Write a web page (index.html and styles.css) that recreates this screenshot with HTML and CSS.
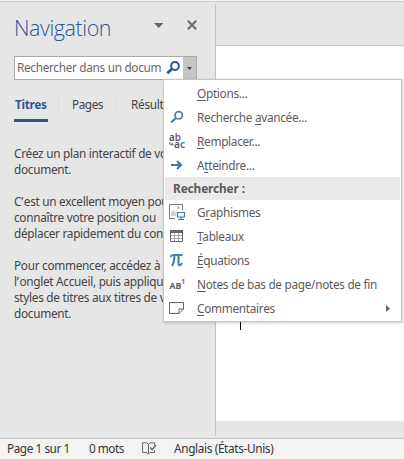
FILE: index.html
```html
<!DOCTYPE html>
<html lang="fr">
<head>
<meta charset="utf-8">
<title>Navigation</title>
<link rel="stylesheet" href="styles.css">
</head>
<body>
<div class="app">
  <div class="ribbon-edge"></div>
  <div class="workspace">
    <aside class="pane">
      <header class="pane-head">
        <h1>Navigation</h1>
        <svg class="caret" width="10" height="5" viewBox="0 0 10 5"><path d="M0 0h9.5L4.75 5z" fill="#666"/></svg>
        <svg class="close" width="10" height="10" viewBox="0 0 10 10"><path d="M.8.8l8.4 8.4M9.2.8L.8 9.2" stroke="#6c6c6c" stroke-width="2"/></svg>
      </header>
      <div class="search">
        <span class="search-text">Rechercher dans un docum</span>
        <svg class="glass" width="15" height="14" viewBox="0 0 15 14" fill="none" stroke="#2b579a"><circle cx="9" cy="5" r="3.9" stroke-width="2"/><path d="M6 8L1.2 12.3" stroke-width="2.7"/></svg>
        <span class="drop"><svg width="5" height="3" viewBox="0 0 5 3"><path d="M0 0h5L2.5 3z" fill="#444"/></svg></span>
      </div>
      <nav class="tabs">
        <span class="tab active">Titres</span><span class="tab pages">Pages</span><span class="tab results">Résultats</span>
      </nav>
      <div class="help">
        <p>Créez un plan interactif de votre<br>document.</p>
        <p>C<span class="apos">’</span>est un excellent moyen pour<br>connaître votre position ou<br>déplacer rapidement du contenu.</p>
        <p>Pour commencer, accédez à<br>l<span class="apos">’</span>onglet Accueil, puis appliquez<br>styles de titres aux titres de vos<br>document.</p>
      </div>
    </aside>
    <main class="canvas"><div class="sheet"><i class="cursor"></i></div></main>
  </div>
  <footer class="status">
    <span class="s-page">Page 1 sur 1</span>
    <span class="s-words">0 mots</span>
    <svg class="s-book" width="15" height="13" viewBox="0 0 15 13" fill="none" stroke="#666"><path d="M6.5 2.5v9M6.5 2.5L5 .8H.6v9.7H5l1.5 1.7L8 10.5h4.5V8M6.5 2.5L8 .8h4.5v2"/><path d="M8 5.5l2.2 2.2L14 3" stroke-width="1.4"/></svg>
    <span class="s-lang">Anglais (États-Unis)</span>
  </footer>

  <div class="menu">
    <div class="item"><span class="ico"></span><span><u>O</u>ptions...</span></div>
    <div class="item"><span class="ico"><svg width="16" height="16" viewBox="0 0 16 16" fill="none" stroke="#4a7ebb"><circle cx="9.7" cy="6.3" r="3.7" stroke-width="1.7"/><path d="M7 9L2 13.5" stroke-width="2.2"/></svg></span><span>Recherche <u>a</u>vancée...</span></div>
    <div class="item"><span class="ico"><svg class="replace" width="18" height="16" viewBox="0 0 18 16"><text x="0" y="7.6" textLength="12" lengthAdjust="spacingAndGlyphs">a<tspan fill="#8050a0">b</tspan></text><text x="5" y="14.8" textLength="11" lengthAdjust="spacingAndGlyphs">a<tspan fill="#3b71b5">c</tspan></text><path d="M.8 9v2.3H4M2.6 9.7l1.6 1.6-1.6 1.6" fill="none" stroke="#3b71b5"/></svg></span><span><u>R</u>emplacer...</span></div>
    <div class="item"><span class="ico"><svg width="16" height="16" viewBox="0 0 16 16" fill="none" stroke="#3f74b5" stroke-width="2"><path d="M2 8h10M8 4l4 4-4 4"/></svg></span><span>A<u>t</u>teindre...</span></div>
    <div class="group">Rechercher :</div>
    <div class="item"><span class="ico"><svg width="16" height="16" viewBox="0 0 16 16"><path d="M6 14.5H.5V.5h13v6" fill="none" stroke="#777"/><circle cx="9.5" cy="3.5" r="1.5" fill="#f0bd77"/><path d="M2 12V8.5L4.5 6 7 8.5V12z" fill="#c6d3e6"/><path d="M8.5 8.5h7v4.5h-7zM12 13v2.5M9 15.5h6" fill="none" stroke="#3f74b5" stroke-width="1.2"/></svg></span><span>G<u>r</u>aphismes</span></div>
    <div class="item"><span class="ico"><svg width="16" height="16" viewBox="0 0 16 16"><path d="M5.5 4v9.5M9.5 4v9.5M1.5 7.5h12M1.5 10.5h12" fill="none" stroke="#aaa"/><path d="M1 2h13v3H1z" fill="#666"/><path d="M1.5 4v9.5h12V4" fill="none" stroke="#666"/></svg></span><span><u>T</u>ableaux</span></div>
    <div class="item"><span class="ico"><svg width="16" height="16" viewBox="0 0 16 16" fill="none" stroke="#467db9"><path d="M1.5 5Q2.3 3 5 3h8.5" stroke-width="2"/><path d="M5.5 3Q5.5 10 3 14M9.5 3v8Q9.5 13.5 11 13.3 12.3 13 13 11" stroke-width="2.1"/></svg></span><span><u>É</u>quations</span></div>
    <div class="item"><span class="ico"><svg class="note" width="18" height="16" viewBox="0 0 18 16"><text x="0.5" y="13" textLength="11.7" lengthAdjust="spacingAndGlyphs">AB</text><text class="mark" x="12.2" y="7.6">1</text></svg></span><span><u>N</u>otes de bas de page/notes de fin</span></div>
    <div class="item"><span class="ico"><svg width="16" height="16" viewBox="0 0 16 16" fill="none" stroke="#666"><path d="M10 13.5H.5v-11h14v6.5L10 13.5zM10 13.5V9h4.5"/></svg></span><span><u>C</u>ommentaires</span><svg class="sub" width="4" height="7" viewBox="0 0 4 7"><path d="M0 0l4 3.5L0 7z" fill="#666"/></svg></div>
  </div>
</div>
</body>
</html>
```
FILE: styles.css
```css
* { box-sizing: border-box; }
body { margin: 0; font: 11.8px/16px "Noto Sans", "Open Sans", sans-serif; color: #444; }
.app { position: relative; width: 404px; height: 459px; display: flex; flex-direction: column; overflow: hidden; background: #e6e6e6; white-space: nowrap; }
.ribbon-edge { height: 2px; background: #f3f3f3; border-bottom: 1px solid #d0d0d0; }
.workspace { height: 436px; display: flex; }
.pane { width: 216px; height: 432px; margin-top: 2px; border-right: 1px solid #c3c3c3; overflow: hidden; flex: none; }
.pane-head { height: 52px; display: flex; align-items: flex-start; padding-left: 14px; }
h1 { margin: 9px 0 0; width: 140px; font: 300 21.5px/30px "Open Sans", "Noto Sans", sans-serif; color: #2b579a; letter-spacing: -0.45px; }
.caret { margin-top: 19px; }
.close { margin: 16px 0 0 23px; }
.search { width: 183px; height: 24px; margin-left: 14px; border: 1px solid #ababab; background: #fff; display: flex; }
.search-text { width: 151px; padding: 2px 0 0 2px; color: #666; letter-spacing: -0.31px; }
.glass { margin-top: 4px; flex: none; }
.drop { margin-left: auto; width: 13px; background: #c6c6c6; display: flex; align-items: center; justify-content: center; }
.tabs { display: flex; margin: 14px 0 0 14px; height: 28px; }
.tab { padding-top: 2px; height: 21px; }
.active { width: 34px; padding-left: 1px; height: 28px; border-bottom: 3px solid #2b579a; color: #2b579a; font-weight: 700; letter-spacing: -0.3px; }
.pages { margin-left: 10px; padding-left: 13px; width: 57px; border-left: 1px solid #dedede; letter-spacing: -0.45px; }
.results { padding-left: 15px; border-left: 1px solid #dedede; letter-spacing: -0.3px; }
.help { margin: 23px 0 0 14px; letter-spacing: -0.29px; }
.help p { margin: 0 0 16px; }
.apos { letter-spacing: 0.6px; }
.canvas { flex: 1; padding-top: 43px; }
.sheet { height: 376px; background: #fff; border-top: 1px solid #c3c3c3; padding: 274px 0 0 24px; }
.cursor { display: block; width: 1px; height: 10px; background: #000; }
.status { height: 21px; border-top: 1px solid #c3c3c3; background: #f3f3f3; display: flex; padding-left: 7px; color: #333; }
.status span { padding-top: 1px; }
.s-page { width: 82px; letter-spacing: -0.45px; }
.s-words { width: 53px; letter-spacing: -0.5px; }
.s-book { margin-top: 3px; }
.s-lang { margin-left: 17px; letter-spacing: -0.35px; }
.menu { position: absolute; left: 163px; top: 79px; width: 239px; height: 243px; padding: 1px 1px 0; border: 1px solid #c6c6c6; background: #fff; box-shadow: 1px 1px 3px rgba(0,0,0,.2); color: #5c5c5c; }
.item { height: 24px; display: flex; align-items: center; padding-left: 4px; letter-spacing: -0.3px; }
.ico { width: 16px; height: 16px; margin-right: 12px; flex: none; }
.ico > svg { display: block; }
.group { height: 23px; background: #eaeaea; padding: 3px 0 0 8px; font-weight: 700; letter-spacing: -0.1px; }
u { text-underline-offset: 2px; text-decoration-thickness: 1px; text-decoration-skip-ink: none; }
.replace { font: 600 10px "Noto Sans", sans-serif; fill: #555; letter-spacing: 0; overflow: visible; }
.note { font: 700 9.5px "Open Sans", sans-serif; fill: #5c5c5c; letter-spacing: 0; overflow: visible; }
.note .mark { font-size: 7px; font-weight: 700; fill: #cf4b2b; }
.sub { margin-left: auto; margin-right: 10px; }
```
